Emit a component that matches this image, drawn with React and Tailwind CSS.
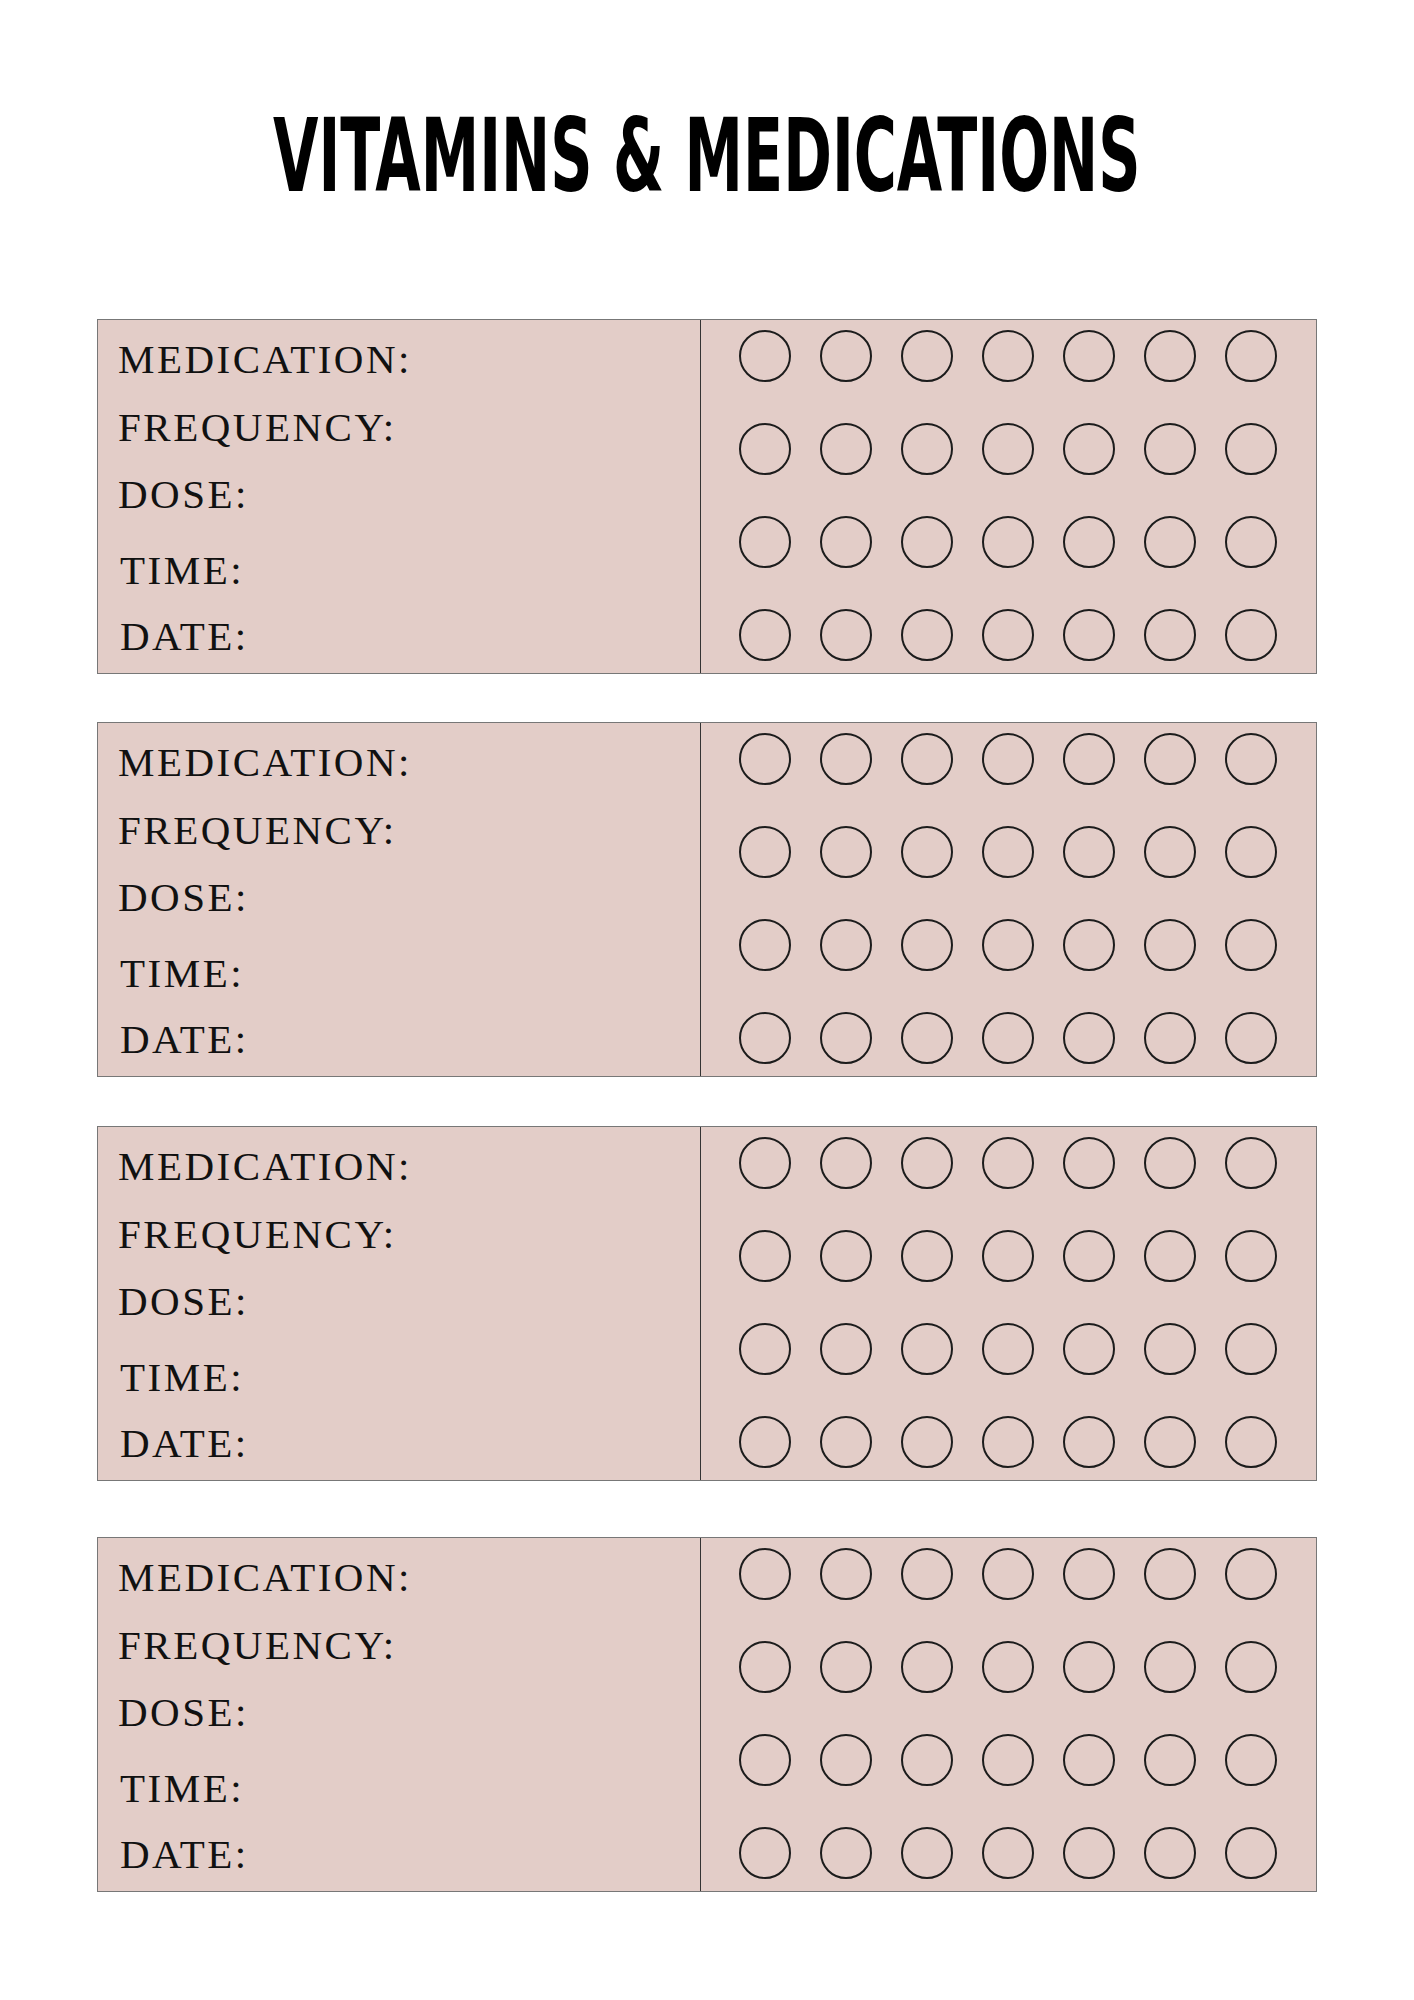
const LABELS = [
  { text: 'MEDICATION:', cls: 'mt-0' },
  { text: 'FREQUENCY:', cls: 'mt-[27px]' },
  { text: 'DOSE:', cls: 'mt-[26px]' },
  { text: 'TIME:', cls: 'mt-[35px] ml-[2px]' },
  { text: 'DATE:', cls: 'mt-[25px] ml-[2px]' },
];

const BOX_MARGINS = ['mt-[112px]', 'mt-[48px]', 'mt-[49px]', 'mt-[56px]'];

function Tracker({ margin }) {
  return (
    <div className={`${margin} flex h-[355px] border border-[#777] bg-[#e3cdc8]`}>
      <div className="w-[602px] pt-[19px] pl-[20px] flex flex-col">
        {LABELS.map((l) => (
          <div
            key={l.text}
            className={`${l.cls} h-[41px] leading-none text-[41px] tracking-[2.5px] text-[#111] font-['Liberation_Serif',serif]`}
          >
            {l.text}
          </div>
        ))}
      </div>
      <div className="flex-1 border-l-[1.5px] border-[#333] pt-[10px] pl-[38px]">
        <div className="grid grid-cols-[repeat(7,52px)] gap-x-[29px] gap-y-[41px]">
          {Array.from({ length: 28 }).map((_, i) => (
            <div key={i} className="w-[52px] h-[52px] rounded-full border-2 border-[#1c1c1c]" />
          ))}
        </div>
      </div>
    </div>
  );
}

export default function App() {
  return (
    <div className="w-[1414px] min-h-[2000px] bg-white">
      <div className="pt-[105px] flex justify-center">
        <h1 className="leading-none text-[102px] font-bold text-black whitespace-nowrap scale-x-[0.64] font-['DejaVu_Sans_Condensed','DejaVu_Sans',sans-serif]">
          VITAMINS &amp; MEDICATIONS
        </h1>
      </div>
      <div className="mx-auto w-[1220px]">
        {BOX_MARGINS.map((m) => (
          <Tracker key={m} margin={m} />
        ))}
      </div>
    </div>
  );
}
